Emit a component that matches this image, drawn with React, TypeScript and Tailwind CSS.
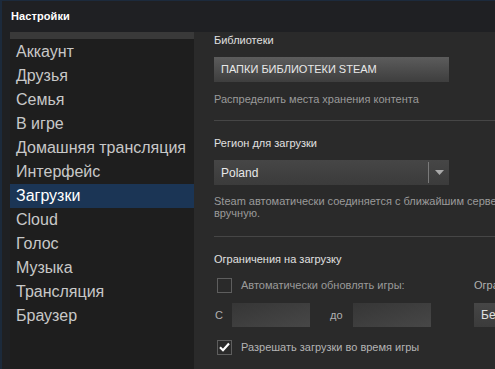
import React from 'react';

const NAV_ITEMS = [
  'Аккаунт',
  'Друзья',
  'Семья',
  'В игре',
  'Домашняя трансляция',
  'Интерфейс',
  'Загрузки',
  'Cloud',
  'Голос',
  'Музыка',
  'Трансляция',
  'Браузер',
];

function Checkbox({ checked }: { checked?: boolean }) {
  return (
    <div className="w-[15px] h-[15px] border border-[#5e5e5e] bg-[#2a2a2a] flex items-center justify-center shrink-0">
      {checked && (
        <svg width="11" height="10" viewBox="0 0 11 10">
          <path d="M1 5.2 L4 8.2 L10 1.5" fill="none" stroke="#ffffff" strokeWidth="2.2" />
        </svg>
      )}
    </div>
  );
}

function Heading({ children }: { children: React.ReactNode }) {
  return <div className="h-[14px] leading-[14px] text-[11px] text-[#e0e0e0] whitespace-nowrap">{children}</div>;
}

export default function App() {
  return (
    <div
      className="w-[495px] h-[369px] overflow-hidden flex flex-col bg-[#1f2023] border-l-2 border-t border-[#1c2a3c]"
      style={{ fontFamily: '"Liberation Sans", Arial, sans-serif' }}
    >
      {/* title bar */}
      <div className="h-[31px] shrink-0 flex items-center pl-[9px]">
        <span className="text-[11px] text-white font-bold tracking-[0.1px]">Настройки</span>
      </div>

      <div className="flex flex-1 min-h-0">
        {/* sidebar */}
        <div className="ml-2 w-[184px] shrink-0 bg-[#1e1e1e] flex flex-col">
          <div className="h-[7px] bg-[#393939]" />
          <div className="h-px" />
          {NAV_ITEMS.map((item) => (
            <div
              key={item}
              className={
                item === 'Загрузки'
                  ? 'h-6 flex items-center pl-1.5 text-[16px] text-white bg-[#1b3555] whitespace-nowrap'
                  : 'h-6 flex items-center pl-1.5 text-[16px] text-[#c8c8c8] whitespace-nowrap'
              }
            >
              {item}
            </div>
          ))}
        </div>

        {/* main content */}
        <div className="flex-1 min-w-0 bg-[#2a2a2a] pl-5 overflow-hidden flex flex-col">
          <div className="mt-px">
            <Heading>Библиотеки</Heading>
          </div>
          <div className="mt-2.5 w-[235px] h-[25px] shrink-0 flex items-center pl-[7px] text-[11px] text-[#e8e8e8] bg-gradient-to-b from-[#5c5c5c] to-[#3e3e3e] whitespace-nowrap">
            ПАПКИ БИБЛИОТЕКИ STEAM
          </div>
          <div className="mt-[11px] h-3 leading-3 text-[11px] text-[#9a9a9a] whitespace-nowrap">
            Распределить места хранения контента
          </div>
          <div className="mt-[15px] h-px shrink-0 bg-[#464646]" />

          <div className="mt-[15px]">
            <Heading>Регион для загрузки</Heading>
          </div>
          <div className="mt-2.5 w-[235px] h-[25px] shrink-0 flex items-center bg-gradient-to-b from-[#464646] to-[#3b3b3b]">
            <span className="flex-1 pl-[7px] text-[12px] text-[#e8e8e8]">Poland</span>
            <div className="w-px h-[21px] bg-[#7a7a7a]" />
            <div className="w-[20px] flex justify-center">
              <svg width="9" height="5" viewBox="0 0 9 5">
                <path d="M0 0 H9 L4.5 5 Z" fill="#a9a9a9" />
              </svg>
            </div>
          </div>
          <div className="mt-2.5 text-[11px] leading-3 text-[#9a9a9a] whitespace-nowrap">
            Steam автоматически соединяется с ближайшим сервером, но вы можете выбрать сервер
            <br />
            вручную.
          </div>
          <div className="mt-[17px] h-px shrink-0 bg-[#464646]" />

          <div className="mt-[15px]">
            <Heading>Ограничения на загрузку</Heading>
          </div>
          <div className="flex">
            <div className="w-[260px] shrink-0 flex flex-col">
              <div className="mt-[11px] h-[16px] flex items-center pl-[3px]">
                <Checkbox />
                <span className="ml-[9px] text-[11px] text-[#9a9a9a] whitespace-nowrap">Автоматически обновлять игры:</span>
              </div>
              <div className="mt-2.5 h-6 flex items-center">
                <span className="w-[18px] pl-px text-[11px] text-[#b0b0b0]">С</span>
                <div className="w-[78px] h-6 bg-gradient-to-br from-[#363636] to-[#474747]" />
                <span className="w-[43px] pl-[20px] text-[11px] text-[#b0b0b0]">до</span>
                <div className="w-[78px] h-6 bg-gradient-to-br from-[#363636] to-[#474747]" />
              </div>
              <div className="mt-3 h-[16px] flex items-center pl-[3px]">
                <Checkbox checked />
                <span className="ml-[9px] text-[11px] text-[#b4b4b4] whitespace-nowrap">Разрешать загрузки во время игры</span>
              </div>
              <div className="mt-[13px] h-[16px] flex items-center pl-[3px]">
                <Checkbox />
                <span className="ml-[9px] text-[11px] text-[#b4b4b4] whitespace-nowrap">Замедлять загрузку во время трансляции</span>
              </div>
            </div>
            <div className="flex flex-col">
              <div className="mt-[11px] h-[16px] flex items-center text-[11px] text-[#b0b0b0] whitespace-nowrap">
                Ограничение скорости загрузки
              </div>
              <div className="mt-2.5 w-[160px] h-6 flex items-center pl-[7px] text-[12px] text-[#e0e0e0] bg-gradient-to-b from-[#464646] to-[#3b3b3b] whitespace-nowrap">
                Без ограничения
              </div>
            </div>
          </div>
        </div>
      </div>
    </div>
  );
}
